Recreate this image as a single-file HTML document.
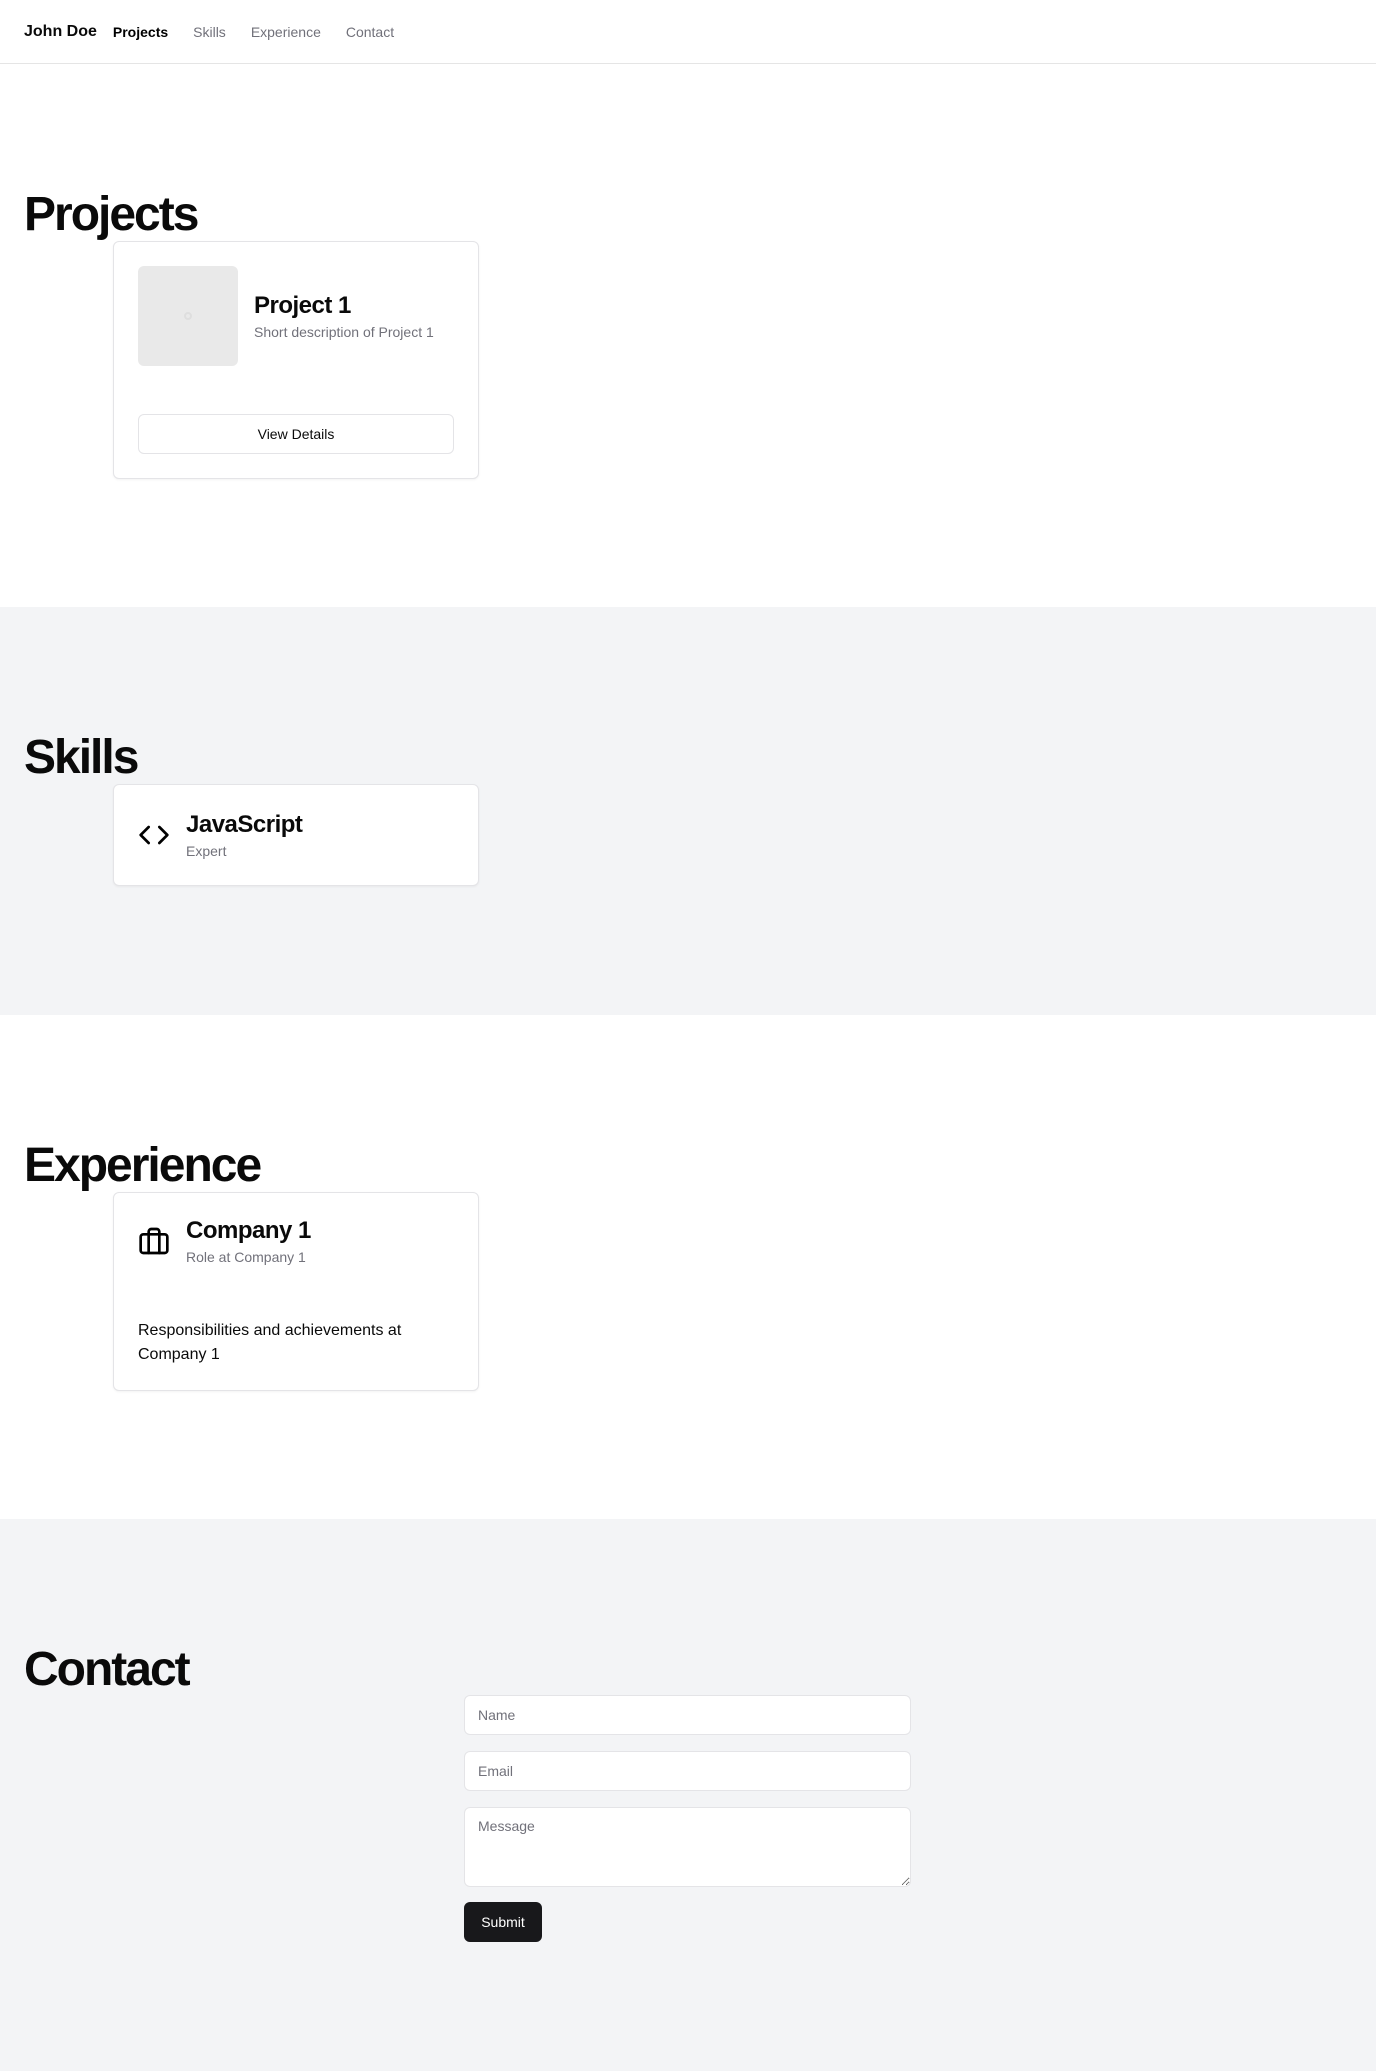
<!DOCTYPE html>
<html><head><meta charset="utf-8"><style>
*{box-sizing:border-box;margin:0;padding:0}
body{width:1376px;height:2070px;overflow:hidden;font-family:"Liberation Sans",sans-serif;color:#0a0a0a;background:#fff}
nav{height:64px;border-bottom:1px solid #e5e5e5;display:flex;align-items:center;padding-left:24px;font-size:14px}
nav .brand{font-size:16px;font-weight:600;margin-right:16px}
nav a{color:#71717a;text-decoration:none;margin-right:25px}
nav a.act{color:#000;font-weight:700}
section{position:relative;padding-top:125px}
h2{font-size:48px;line-height:52px;font-weight:700;letter-spacing:-2px;margin-left:24px;height:52px}
.card{margin-left:113px;width:366px;background:#fff;border:1px solid #e4e4e7;border-radius:6px;box-shadow:0 1px 2px rgba(0,0,0,.05)}
.muted{color:#71717a;font-size:14px}
input,textarea{display:block;width:447px;border:1px solid #e4e4e7;border-radius:6px;background:#fff;font-family:inherit;font-size:14px;padding:0 13px;color:#000}
input::placeholder,textarea::placeholder{color:#71717a}
</style></head><body>
<nav><span class="brand">John Doe</span><a class="act" href="#">Projects</a><a href="#">Skills</a><a href="#">Experience</a><a href="#">Contact</a></nav>
<section style="height:543px">
<h2>Projects</h2>
<div class="card" style="height:238px;padding:24px">
 <div style="display:flex;align-items:center">
  <div style="width:100px;height:100px;background:#e9e9e9;border-radius:6px;display:flex;align-items:center;justify-content:center"><div style="width:8px;height:8px;border-radius:50%;border:2px solid #dedede"></div></div>
  <div style="margin-left:16px"><div style="font-size:24px;font-weight:600;letter-spacing:-.5px">Project 1</div><div class="muted" style="margin-top:4px">Short description of Project 1</div></div>
 </div>
 <div style="margin-top:48px;height:40px;border:1px solid #e4e4e7;border-radius:6px;display:flex;align-items:center;justify-content:center;font-size:14px;font-weight:500">View Details</div>
</div>
</section>
<section style="height:408px;background:#f3f4f6">
<h2>Skills</h2>
<div class="card" style="height:102px;padding:24px;display:flex;align-items:center">
 <svg width="32" height="32" viewBox="0 0 24 24" fill="none" stroke="#000" stroke-width="2" stroke-linecap="round" stroke-linejoin="round"><path d="M16 18l6-6-6-6M8 6l-6 6 6 6"/></svg>
 <div style="margin-left:16px"><div style="font-size:24px;font-weight:600;letter-spacing:-.5px">JavaScript</div><div class="muted" style="margin-top:4px">Expert</div></div>
</div>
</section>
<section style="height:504px">
<h2>Experience</h2>
<div class="card" style="height:199px;padding:24px">
 <div style="display:flex;align-items:center">
  <svg width="32" height="32" viewBox="0 0 24 24" fill="none" stroke="#000" stroke-width="2" stroke-linecap="round" stroke-linejoin="round"><rect x="2" y="7" width="20" height="14" rx="2"/><path d="M16 21V5a2 2 0 0 0-2-2h-4a2 2 0 0 0-2 2v16"/></svg>
  <div style="margin-left:16px"><div style="font-size:24px;font-weight:600;letter-spacing:-.5px">Company 1</div><div class="muted" style="margin-top:4px">Role at Company 1</div></div>
 </div>
 <div style="margin-top:54px;font-size:16px;line-height:24px">Responsibilities and achievements at<br>Company 1</div>
</div>
</section>
<section style="height:552px;background:#f3f4f6">
<h2>Contact</h2>
<div style="margin-left:464px;margin-top:-1px">
 <input placeholder="Name" style="height:40px">
 <input placeholder="Email" style="height:40px;margin-top:16px">
 <textarea placeholder="Message" style="height:80px;margin-top:16px;padding-top:10px;resize:vertical"></textarea>
 <div style="margin-top:15px;width:78px;height:40px;background:#18181b;color:#fff;border-radius:6px;display:flex;align-items:center;justify-content:center;font-size:14px;font-weight:500">Submit</div>
</div>
</section>
</body></html>
